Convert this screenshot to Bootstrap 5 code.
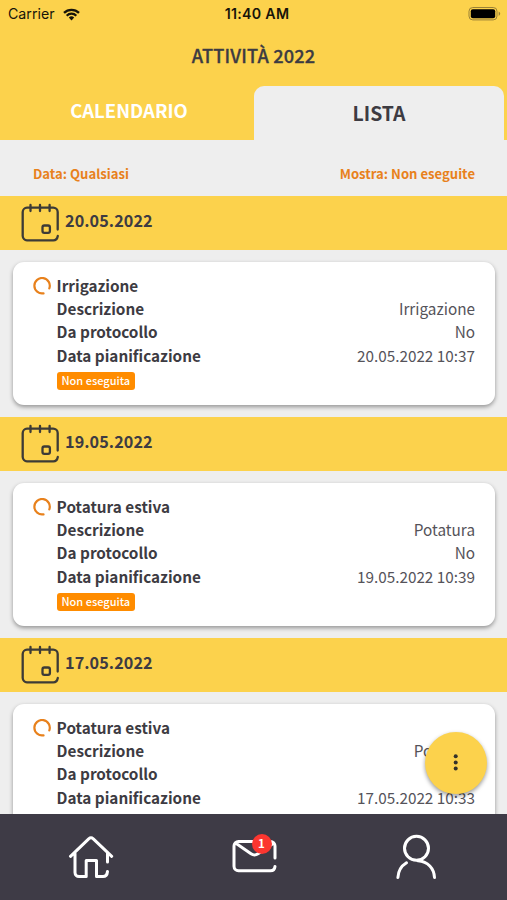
<!DOCTYPE html>
<html lang="it">
<head>
<meta charset="utf-8">
<meta name="viewport" content="width=device-width, initial-scale=1">
<title>Attività 2022</title>
<link href="https://cdn.jsdelivr.net/npm/bootstrap@5.3.0/dist/css/bootstrap.min.css" rel="stylesheet">
<style>
  :root { --sun: #fcd24c; --ink: #3d3b42; --paper: #eeeeee; --accent: #e8811c; --bar: #3e3b46; }
  body { font-family: "Noto Sans CJK SC", "Noto Sans", sans-serif; color: var(--ink); background: var(--paper); }
  .screen { height: 900px; overflow: hidden; }
  .top { background: var(--sun); height: 140px; }
  .status { height: 28px; font-family: Inter, "Liberation Sans", sans-serif; color: #17140a; font-size: 14.2px; line-height: 28px; padding: 0 6px 0 8px; }
  .status > * { flex: 1 1 0; }
  .clock { font-weight: 600; font-size: 14.2px; letter-spacing: .3px; padding-left: 5px; }
  .title { height: 58px; line-height: 55px; font-size: 18.2px; font-weight: 500; letter-spacing: .15px; -webkit-text-stroke: .3px currentColor; }
  .tabs { height: 54px; font-size: 18.5px; padding-right: 3px; }
  .tabs > * { line-height: 49px; }
  .tab-on { background: var(--paper); border-radius: 10px 10px 0 0; line-height: 54px; font-size: 19.4px; }
  .filters { height: 56px; padding: 12px 32px 0 33px; color: var(--accent); font-size: 13.1px; line-height: 44px; }
  .day { background: var(--sun); height: 54px; padding-left: 20px; font-size: 16.2px; letter-spacing: .08px; line-height: 49px; }
  .day svg { margin: 7px 5px 0 0; }
  .task { height: 143px; margin: 12px 12px 12px 13px; padding: 12px 20px 0 20px; border: 0; border-radius: 11px; box-shadow: 0 2px 4px rgba(0,0,0,.38); color: var(--ink); }
  .line { height: 23.2px; line-height: 23.2px; font-size: 15.3px; padding-left: 23.6px; }
  .line.first { padding-left: 0; }
  .line svg { margin: 3px 5.6px 0 0; }
  .value { color: #55535a; }
  .state { align-self: flex-start; margin: 5px 0 0 24px; height: 18px; line-height: 17px; padding: 0 4.500px; border-radius: 3px; background: #ff8c00; color: #fff; font-size: 11px; font-weight: 500; }
  .list { height: 618px; overflow: hidden; }
  .fab { right: 20px; bottom: 20px; width: 62px; height: 62px; background: var(--sun); box-shadow: 0 2px 4px rgba(0,0,0,.4); }
  .bottom { height: 86px; background: var(--bar); }
  .home { margin-left: 13px; }
  .count { left: 21px; top: -5px; width: 20px; height: 20px; line-height: 19px; background: #fb3630; color: #fff; font-size: 11.5px; }
</style>
<script src="https://cdn.jsdelivr.net/npm/bootstrap@5.3.0/dist/js/bootstrap.bundle.min.js"></script>
</head>
<body>
<svg width="0" height="0" class="position-absolute" aria-hidden="true">
  <symbol id="cal" viewBox="0 0 40 40">
    <g fill="none" stroke="#3d3b36" stroke-width="2.300" stroke-linecap="round" stroke-linejoin="round">
      <path d="M37.700 26.500V9a4.500 4.500 0 0 0-4.500-4.300H7A4.500 4.500 0 0 0 2.700 9v24A4.500 4.500 0 0 0 7 37.300h26.300c2.500 0 4-1.600 4.500-4.300"/>
      <path d="M10.500 2v6M20 2v6M29.600 2v6"/>
      <rect x="22.500" y="22.500" width="7.400" height="7.400" rx="1.800"/>
    </g>
  </symbol>
  <symbol id="ring" viewBox="0 0 18 18">
    <path d="M10.500 16.300A7.700 7.700 0 1 1 16.300 11.400" fill="none" stroke="#e8811c" stroke-width="2.200" stroke-linecap="round"/>
  </symbol>
</svg>
<div class="screen d-flex flex-column">
  <header class="top">
    <div class="status d-flex">
      <div class="d-flex align-items-center">Carrier
        <svg class="ms-2" width="17" height="13" viewBox="0 0 17 13"><g fill="none" stroke="#17140a" stroke-width="2.300"><path d="M1 4.900a10.600 10.600 0 0 1 15 0"/><path d="M3.700 7.700a6.800 6.800 0 0 1 9.600 0"/></g><path d="M5.800 9.600a3.900 3.900 0 0 1 5.400 0L8.500 12.500z" fill="#17140a"/></svg>
      </div>
      <div class="clock text-center text-nowrap">11:40 AM</div>
      <div class="d-flex align-items-center justify-content-end">
        <svg width="33" height="14" viewBox="0 0 33 14"><rect x="1" y=".5" width="28" height="12.400" rx="3.800" fill="none" stroke="#9a8136"/><rect x="2.800" y="2.200" width="24.400" height="9" rx="2" fill="#000"/><path d="M30.700 4.500q3 2.200 0 4.400z" fill="#9a8136"/></svg>
      </div>
    </div>
    <div class="title text-center">ATTIVITÀ 2022</div>
    <nav class="tabs row g-0 text-center fw-bold">
      <div class="col text-white ps-1">CALENDARIO</div>
      <div class="col tab-on">LISTA</div>
    </nav>
  </header>
  <div class="filters d-flex justify-content-between fw-bold"><span>Data: Qualsiasi</span><span>Mostra: Non eseguite</span></div>
  <div class="position-relative">
    <main class="list">
      <div class="day d-flex fw-bold"><svg width="40" height="40"><use href="#cal"/></svg>20.05.2022</div>
      <div class="task card">
        <div class="line first d-flex fw-bold"><svg width="18" height="18"><use href="#ring"/></svg>Irrigazione</div>
        <div class="line d-flex justify-content-between"><b>Descrizione</b><span class="value">Irrigazione</span></div>
        <div class="line d-flex justify-content-between"><b>Da protocollo</b><span class="value">No</span></div>
        <div class="line d-flex justify-content-between"><b>Data pianificazione</b><span class="value">20.05.2022 10:37</span></div>
        <span class="state">Non eseguita</span>
      </div>
      <div class="day d-flex fw-bold"><svg width="40" height="40"><use href="#cal"/></svg>19.05.2022</div>
      <div class="task card">
        <div class="line first d-flex fw-bold"><svg width="18" height="18"><use href="#ring"/></svg>Potatura estiva</div>
        <div class="line d-flex justify-content-between"><b>Descrizione</b><span class="value">Potatura</span></div>
        <div class="line d-flex justify-content-between"><b>Da protocollo</b><span class="value">No</span></div>
        <div class="line d-flex justify-content-between"><b>Data pianificazione</b><span class="value">19.05.2022 10:39</span></div>
        <span class="state">Non eseguita</span>
      </div>
      <div class="day d-flex fw-bold"><svg width="40" height="40"><use href="#cal"/></svg>17.05.2022</div>
      <div class="task card">
        <div class="line first d-flex fw-bold"><svg width="18" height="18"><use href="#ring"/></svg>Potatura estiva</div>
        <div class="line d-flex justify-content-between"><b>Descrizione</b><span class="value">Potatura</span></div>
        <div class="line d-flex justify-content-between"><b>Da protocollo</b><span class="value">No</span></div>
        <div class="line d-flex justify-content-between"><b>Data pianificazione</b><span class="value">17.05.2022 10:33</span></div>
      </div>
    </main>
    <button class="fab btn rounded-circle border-0 position-absolute p-0 d-flex align-items-center justify-content-center" aria-label="Menu">
      <svg width="6" height="18" viewBox="0 0 6 18" fill="#35322a"><circle cx="2.700" cy="2.200" r="2"/><circle cx="2.700" cy="8.400" r="2"/><circle cx="2.700" cy="14.600" r="2"/></svg>
    </button>
  </div>
  <footer class="bottom row g-0 text-center">
    <div class="col d-flex justify-content-center align-items-center">
      <svg class="home" width="46" height="44" viewBox="0 0 46 44" fill="none" stroke="#fff" stroke-width="3" stroke-linecap="round" stroke-linejoin="round"><path d="M2.500 21.300L20.700 3.800q2.300-2 4.600 0L43.700 21.300M7 18.500V37.500a4 4 0 0 0 4 4H18.200V25.500H28.500V41.500H35c2.800 0 4.200-1.700 4.500-5M39.500 18.500V27"/></svg>
    </div>
    <div class="col d-flex justify-content-center align-items-center">
      <div class="position-relative d-flex">
        <svg width="46" height="36" viewBox="0 0 46 36" fill="none" stroke="#fff" stroke-width="3" stroke-linecap="round" stroke-linejoin="round"><path d="M44 19V7A4.500 4.500 0 0 0 39.500 2.500H7.500A4.500 4.500 0 0 0 3 7V27.300A4.500 4.500 0 0 0 7.500 31.800H39.500c2.700 0 4.200-1.600 4.500-4.300M4.500 4L20 14.800q3.500 2.400 7 0L42.800 4"/></svg>
        <span class="count position-absolute rounded-circle fw-bold">1</span>
      </div>
    </div>
    <div class="col d-flex justify-content-center align-items-center">
      <svg class="me-3" width="44" height="46" viewBox="0 0 44 46" fill="none" stroke="#fff" stroke-width="3" stroke-linecap="round"><circle cx="23.500" cy="14.300" r="12"/><path d="M13.500 28.800C8.300 32 5.200 37.500 4.900 43.500M25 26.800C35 27.500 41 34.500 41.500 43.500"/></svg>
    </div>
  </footer>
</div>
</body>
</html>
